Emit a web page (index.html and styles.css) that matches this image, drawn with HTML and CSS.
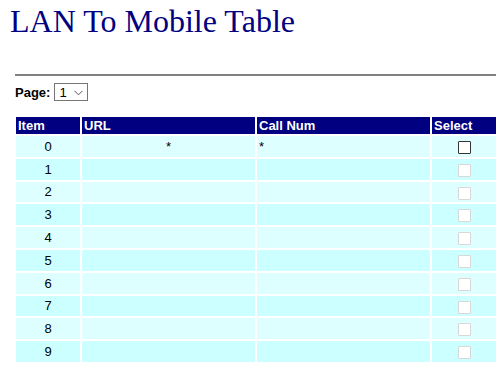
FILE: index.html
```html
<!DOCTYPE html>
<html>
<head>
<meta charset="utf-8">
<link rel="stylesheet" href="styles.css">
</head>
<body>
<h1 class="title">LAN To Mobile Table</h1>
<hr class="rule">
<div class="pager">
  <label class="pager-label">Page:</label>
  <div class="select-box"><span class="select-val">1</span><svg class="chev" width="9" height="6" viewBox="0 0 9 6"><path d="M0.5 0.8 L4.5 4.8 L8.5 0.8" fill="none" stroke="#555" stroke-width="1"/></svg></div>
</div>
<table class="grid">
  <thead>
    <tr><th class="c-item">Item</th><th class="c-url">URL</th><th class="c-num">Call Num</th><th class="c-sel">Select</th></tr>
  </thead>
  <tbody>
    <tr class="r-a"><td class="center">0</td><td class="center">*</td><td>*</td><td class="center"><span class="cb"></span></td></tr>
    <tr class="r-b"><td class="center">1</td><td></td><td></td><td class="center"><span class="cb off"></span></td></tr>
    <tr class="r-a"><td class="center">2</td><td></td><td></td><td class="center"><span class="cb off"></span></td></tr>
    <tr class="r-b"><td class="center">3</td><td></td><td></td><td class="center"><span class="cb off"></span></td></tr>
    <tr class="r-a"><td class="center">4</td><td></td><td></td><td class="center"><span class="cb off"></span></td></tr>
    <tr class="r-b"><td class="center">5</td><td></td><td></td><td class="center"><span class="cb off"></span></td></tr>
    <tr class="r-a"><td class="center">6</td><td></td><td></td><td class="center"><span class="cb off"></span></td></tr>
    <tr class="r-b"><td class="center">7</td><td></td><td></td><td class="center"><span class="cb off"></span></td></tr>
    <tr class="r-a"><td class="center">8</td><td></td><td></td><td class="center"><span class="cb off"></span></td></tr>
    <tr class="r-b"><td class="center">9</td><td></td><td></td><td class="center"><span class="cb off"></span></td></tr>
  </tbody>
</table>
</body>
</html>
```
FILE: styles.css
```css
html, body { margin: 0; padding: 0; background: #fff; }
body { padding: 0 4px 0 14px; font-family: "Liberation Sans", Arial, sans-serif; }
.title {
  font-family: "Liberation Serif", "Times New Roman", serif;
  font-weight: normal;
  font-size: 32px;
  color: #000080;
  margin: 0 0 0 -4px;
  padding-top: 5px;
  line-height: 32px;
}
.rule {
  margin: 37px 0 0 1px;
  border: 0;
  border-top: 2px solid #808080;
  height: 0;
}
.pager { display: flex; align-items: center; margin: 6px 0 0 1px; height: 20px; }
.pager-label { font-weight: bold; font-size: 13px; color: #000; margin-right: 4px; }
.select-box {
  display: flex; align-items: center; justify-content: space-between;
  width: 34px; height: 18px; box-sizing: border-box;
  border: 1px solid #767676; background: #fff; padding: 0 4px 0 4px;
  font-size: 13px;
}
.chev { margin-top: 2px; }
.grid { border-collapse: separate; border-spacing: 2px; margin-top: 13px; width: 484px; table-layout: fixed; font-size: 13px; }
.grid th { background: #000080; color: #fff; text-align: left; font-weight: bold; height: 17px; padding: 0 2px; }
.c-item { width: 60px; }
.c-url { width: 169px; }
.c-num { width: 169px; }
.grid td { height: 20.8px; padding: 0 2px; vertical-align: middle; color: #000; }
.r-a td { background: #ddffff; }
.r-b td { background: #ccffff; }
.center { text-align: center; }
.cb { display: inline-block; width: 13px; height: 13px; box-sizing: border-box; border: 1px solid #333; background: #fff; vertical-align: middle; border-radius: 1px; }
.cb.off { border-color: #d8d8d8; }
```
